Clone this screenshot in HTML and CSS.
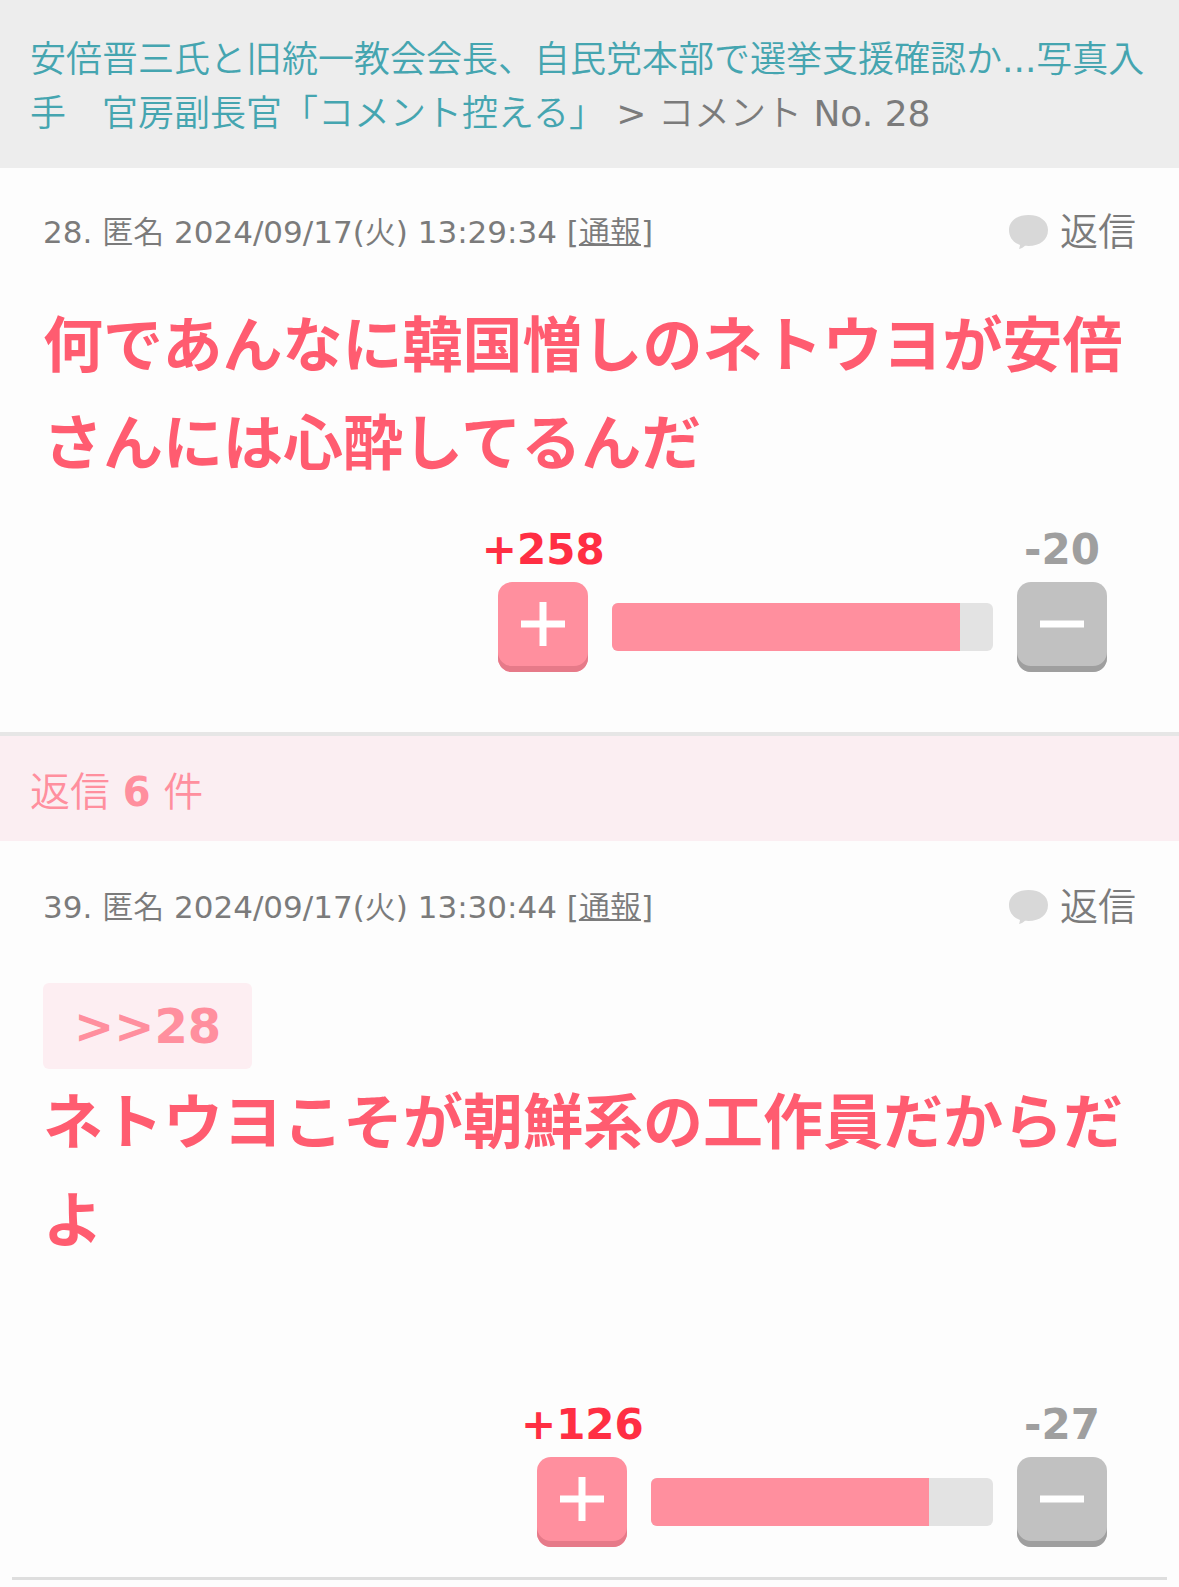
FILE: index.html
```html
<!DOCTYPE html>
<html lang="ja">
<head>
    <meta charset="UTF-8">
    <meta name="viewport" content="width=device-width, initial-scale=1.0">
    <title>コメント No. 28</title>
    <link rel="stylesheet" href="styles.css">
</head>
<body>
    <nav class="breadcrumb">
        <a href="#">安倍晋三氏と旧統一教会会長、自民党本部で選挙支援確認か...写真入手　官房副長官「コメント控える」</a> &gt; コメント No. 28
    </nav>

    <main>
        <article class="comment" id="comment28">
            <header class="comment-head">
                <p class="comment-info">28. 匿名 2024/09/17(火) 13:29:34 [<a href="#">通報</a>]</p>
                <a class="reply-link" href="#">
                    <svg class="reply-icon" viewBox="0 0 39 34" aria-hidden="true">
                        <path d="M19.500 0C8 0 0 6 0 15c0 7 4 12.500 11 15-.2 1.500-.4 2.800-1 4 2.500-.6 4.500-1.800 6-3.200C30 32 39 25.500 39 15 39 6 31 0 19.500 0z"/>
                    </svg>
                    返信
                </a>
            </header>
            <div class="comment-body">何であんなに韓国憎しのネトウヨが安倍さんには心酔してるんだ</div>
            <div class="vote">
                <div class="vote-item">
                    <span class="count plus">+258</span>
                    <button class="vote-btn btn-plus" type="button" aria-label="プラス">
                        <svg viewBox="0 0 44 44"><path d="M22 0v44M0 22h44"/></svg>
                    </button>
                </div>
                <div class="gauge" style="width: 34.4%">
                    <div class="gauge-fill" style="width: 91.4%"></div>
                </div>
                <div class="vote-item">
                    <span class="count minus">-20</span>
                    <button class="vote-btn btn-minus" type="button" aria-label="マイナス">
                        <svg viewBox="0 0 44 44"><path d="M0 22h44"/></svg>
                    </button>
                </div>
            </div>
        </article>

        <h2 class="reply-count">返信 <b>6</b> 件</h2>

        <article class="comment reply" id="comment39">
            <header class="comment-head">
                <p class="comment-info">39. 匿名 2024/09/17(火) 13:30:44 [<a href="#">通報</a>]</p>
                <a class="reply-link" href="#">
                    <svg class="reply-icon" viewBox="0 0 39 34" aria-hidden="true">
                        <path d="M19.500 0C8 0 0 6 0 15c0 7 4 12.500 11 15-.2 1.500-.4 2.800-1 4 2.500-.6 4.500-1.800 6-3.200C30 32 39 25.500 39 15 39 6 31 0 19.500 0z"/>
                    </svg>
                    返信
                </a>
            </header>
            <div class="comment-body">
                <a class="res-anchor" href="#comment28">&gt;&gt;28</a>
                ネトウヨこそが朝鮮系の工作員だからだよ<br><br>
            </div>
            <div class="vote">
                <div class="vote-item">
                    <span class="count plus">+126</span>
                    <button class="vote-btn btn-plus" type="button" aria-label="プラス">
                        <svg viewBox="0 0 44 44"><path d="M22 0v44M0 22h44"/></svg>
                    </button>
                </div>
                <div class="gauge" style="width: 31.2%">
                    <div class="gauge-fill" style="width: 81.3%"></div>
                </div>
                <div class="vote-item">
                    <span class="count minus">-27</span>
                    <button class="vote-btn btn-minus" type="button" aria-label="マイナス">
                        <svg viewBox="0 0 44 44"><path d="M0 22h44"/></svg>
                    </button>
                </div>
            </div>
        </article>
    </main>
</body>
</html>
```

FILE: styles.css
```css
:root {
    --pink: #ff8f9e;
    --pink-dark: #e67a89;
    --pink-bg: #fbeef2;
    --text: #7b7b7b;
    --gray: #c1c1c1;
    --gray-dark: #9f9f9f;
}

* {
    box-sizing: border-box;
}

body {
    margin: 0;
    background: #fdfdfd;
    color: var(--text);
    font-family: Verdana, "DejaVu Sans", "Noto Sans CJK JP DemiLight", "Noto Sans CJK JP Light", "Noto Sans CJK JP", sans-serif;
}

.breadcrumb {
    padding: 33px 30px 27px;
    background: #ededed;
    font-size: 36px;
    line-height: 54px;
}

.breadcrumb a {
    color: #45a5b0;
    text-decoration: none;
}

.comment {
    padding: 41px 0 60px;
}

.comment-head {
    display: flex;
    justify-content: space-between;
    align-items: center;
    padding: 0 43px;
    line-height: 46px;
}

.comment-info {
    margin: 0;
    font-size: 31px;
}

.comment-info a {
    color: inherit;
    text-decoration-thickness: 2px;
}

.reply-link {
    display: flex;
    align-items: center;
    gap: 12px;
    color: var(--text);
    font-size: 38px;
    text-decoration: none;
}

.reply-icon {
    width: 39px;
    height: 34px;
    fill: #d8d8d8;
}

.comment-body {
    margin: 37px 43px;
    color: #ff5c70;
    font-family: "Noto Sans CJK JP", sans-serif;
    font-size: 60px;
    font-weight: bold;
    line-height: 98px;
}

.reply .comment-body {
    margin-top: 53px;
}

.res-anchor {
    display: block;
    width: fit-content;
    padding: 0 31px;
    border-radius: 6px;
    background: #fdeef2;
    color: var(--pink);
    font-family: Verdana, "DejaVu Sans", sans-serif;
    font-size: 48px;
    line-height: 86px;
    text-decoration: none;
}

.vote {
    display: flex;
    justify-content: flex-end;
    align-items: flex-end;
    gap: 24px;
    margin-right: 72px;
}

.vote-item {
    display: flex;
    flex-direction: column;
    align-items: center;
    gap: 7px;
    width: 90px;
}

.count {
    font-size: 42px;
    font-weight: bold;
    line-height: 50px;
    white-space: nowrap;
}

.plus {
    color: #ff2e43;
}

.minus {
    color: var(--gray-dark);
}

.vote-btn {
    display: flex;
    justify-content: center;
    width: 90px;
    height: 90px;
    padding: 20px 0 0;
    border: none;
    border-radius: 14px;
    cursor: pointer;
}

.vote-btn svg {
    width: 44px;
    height: 44px;
    fill: none;
    stroke: #ffffff;
    stroke-width: 7;
}

.btn-plus {
    background: var(--pink);
    box-shadow: inset 0 -6px 0 var(--pink-dark);
}

.btn-minus {
    background: var(--gray);
    box-shadow: inset 0 -6px 0 var(--gray-dark);
}

.gauge {
    height: 48px;
    margin-bottom: 21px;
    border-radius: 6px;
    background: #e3e3e3;
    overflow: hidden;
}

.gauge-fill {
    height: 100%;
    background: var(--pink);
}

.reply-count {
    margin: 0;
    padding: 29px 30px 22px;
    border-top: 4px solid #e6e6e6;
    background: var(--pink-bg);
    color: var(--pink);
    font-size: 40px;
    font-weight: normal;
    line-height: 54px;
}

.reply-count b {
    font-weight: bold;
}

.reply {
    margin: 0 12px;
    padding: 43px 0 30px;
    border-bottom: 3px solid #dedede;
}

.reply .comment-head {
    padding: 0 31px;
}

.reply .comment-body {
    margin-right: 31px;
    margin-left: 31px;
}

.reply .vote {
    margin-right: 60px;
}
```
